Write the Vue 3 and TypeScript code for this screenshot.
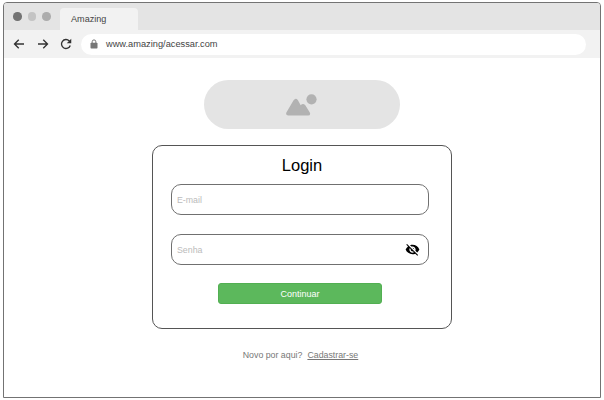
<script setup lang="ts">
import { ref } from 'vue'

const email = ref('')
const password = ref('')
const address = 'www.amazing/acessar.com'
</script>

<template>
  <div class="page">
    <div class="window">
      <header class="tabs">
        <div class="dots">
          <span class="dot dark"></span>
          <span class="dot light"></span>
          <span class="dot mid"></span>
        </div>
        <div class="tab">Amazing</div>
      </header>
      <nav class="toolbar">
        <svg class="nav" viewBox="0 0 24 24"><path d="M22 12H4M11.500 3.500L3 12l8.500 8.500" /></svg>
        <svg class="nav" viewBox="0 0 24 24"><path d="M2 12h18M12.500 3.500L21 12l-8.500 8.500" /></svg>
        <svg class="nav reload" viewBox="0 0 24 24"><path d="M20.500 15A9 9 0 1 1 18.500 5.800l2 2" /><path class="solid" d="M22.500 1.500v9h-9z" /></svg>
        <div class="address">
          <svg class="lock" viewBox="0 0 16 20"><path d="M4.300 9V5.500a3.700 3.700 0 0 1 7.400 0V9" /><rect x="1" y="7.500" width="14" height="11.500" rx="1.500" /></svg>
          <span>{{ address }}</span>
        </div>
      </nav>
      <main class="content">
        <div class="banner">
          <svg class="picture" viewBox="0 0 31 22">
            <path d="M2.300 21.500Q-.8 21.300 .5 18.300L7.600 6.200Q9.700 3.200 11.800 6l2.900 5.200q2.300-2.600 4.600 0l4.500 7.200q1.200 3-1.800 3.100z" />
            <circle cx="25.500" cy="5.300" r="5.100" />
          </svg>
        </div>
        <form class="card" @submit.prevent>
          <h1>Login</h1>
          <div class="fields">
            <div class="field"><input v-model="email" type="text" placeholder="E-mail" /></div>
            <div class="field">
              <input v-model="password" type="password" placeholder="Senha" />
              <svg class="eye" viewBox="0 0 24 24"><path d="M12 7c2.760 0 5 2.240 5 5 0 .65-.13 1.260-.36 1.830l2.920 2.920c1.510-1.260 2.700-2.890 3.430-4.750-1.730-4.390-6-7.500-11-7.500-1.400 0-2.740.25-3.980.7l2.160 2.160C10.740 7.130 11.350 7 12 7zM2 4.270l2.280 2.280.46.46C3.080 8.300 1.780 10.020 1 12c1.730 4.390 6 7.500 11 7.500 1.550 0 3.030-.3 4.380-.84l.42.42L19.730 22 21 20.730 3.270 3 2 4.270zM7.530 9.800l1.550 1.550c-.05.21-.08.43-.08.65 0 1.660 1.340 3 3 3 .22 0 .44-.03.65-.08l1.550 1.550c-.67.33-1.410.53-2.200.53-2.760 0-5-2.240-5-5 0-.79.2-1.530.53-2.200zm4.310-.78l3.150 3.150.02-.16c0-1.660-1.340-3-3-3l-.17.01z" /></svg>
            </div>
            <button type="submit">Continuar</button>
          </div>
        </form>
        <p class="signup">Novo por aqui?<a>Cadastrar-se</a></p>
      </main>
    </div>
  </div>
</template>

<style>
body {
  margin: 0;
  background: #fff;
}
</style>

<style scoped>
* {
  box-sizing: border-box;
}
.page {
  width: 604px;
  height: 400px;
  padding: 2px 3px;
  font-family: "Liberation Sans", Arial, sans-serif;
}
.window {
  width: 598px;
  height: 396px;
  border: 1px solid #737373;
  border-radius: 4px 4px 0 0;
  overflow: hidden;
  background: #fff;
}
.tabs {
  display: flex;
  height: 27px;
  background: #e4e4e4;
}
.dots {
  display: flex;
  gap: 6px;
  width: 56px;
  padding: 9px 0 0 9px;
}
.dot {
  width: 8.500px;
  height: 8.500px;
  border-radius: 50%;
}
.dark { background: #737373; }
.light { background: #c4c4c4; }
.mid { background: #adadad; }
.tab {
  width: 78px;
  height: 22px;
  margin-top: 5px;
  padding-left: 11px;
  border-radius: 4px 4px 0 0;
  background: #f2f2f2;
  color: #444;
  font-size: 9.100px;
  line-height: 23px;
}
.toolbar {
  display: flex;
  align-items: center;
  height: 28px;
  padding-left: 9px;
  background: #f2f2f2;
}
.nav {
  width: 12px;
  height: 12px;
  margin-right: 11.500px;
  fill: none;
  stroke: #333;
  stroke-width: 2.700;
}
.reload {
  margin-right: 9px;
}
.solid {
  fill: #333;
  stroke: none;
}
.address {
  display: flex;
  align-items: center;
  width: 505px;
  height: 21px;
  padding-left: 9px;
  border-radius: 11px;
  background: #fff;
  color: #444;
  font-size: 9.250px;
}
.lock {
  width: 8px;
  height: 10px;
  margin-right: 8px;
  fill: #777;
}
.lock path {
  fill: none;
  stroke: #777;
  stroke-width: 2;
}
.content {
  display: flex;
  flex-direction: column;
  align-items: center;
  padding-top: 22px;
}
.banner {
  display: flex;
  justify-content: center;
  width: 196px;
  height: 49px;
  padding: 13.500px 1px 0 0;
  border-radius: 25px;
  background: #e4e4e4;
}
.picture {
  width: 31px;
  height: 22px;
  fill: #b2b2b2;
}
.card {
  width: 300px;
  height: 184px;
  margin-top: 16px;
  border: 1px solid #555;
  border-radius: 10px;
}
h1 {
  margin: 9px 0 8px;
  color: #000;
  font-size: 16.500px;
  font-weight: 400;
  line-height: 21px;
  text-align: center;
}
.fields {
  display: flex;
  flex-direction: column;
  align-items: center;
  gap: 19px;
  width: 258px;
  margin-left: 18px;
}
.field {
  display: flex;
  align-items: center;
  width: 258px;
  height: 31px;
  padding: 0 8px 0 5px;
  border: 1px solid #707070;
  border-radius: 10px;
}
input {
  flex: 1;
  min-width: 0;
  padding: 0;
  border: 0;
  outline: 0;
  background: transparent;
  font: 8.800px "Liberation Sans", Arial, sans-serif;
}
input::placeholder {
  color: #bbb;
  opacity: 1;
}
.eye {
  width: 15px;
  height: 15px;
  fill: #000;
}
button {
  width: 164px;
  height: 21px;
  margin-top: -1px;
  padding: 0;
  border: 1px solid #52af52;
  border-radius: 3px;
  background: #5cb85c;
  color: #fff;
  font: 9px "Liberation Sans", Arial, sans-serif;
}
.signup {
  margin: 20px 0 0;
  padding-right: 3px;
  color: #777;
  font-size: 8.800px;
  line-height: 12px;
}
.signup a {
  margin-left: 5px;
  text-decoration: underline;
}
</style>
